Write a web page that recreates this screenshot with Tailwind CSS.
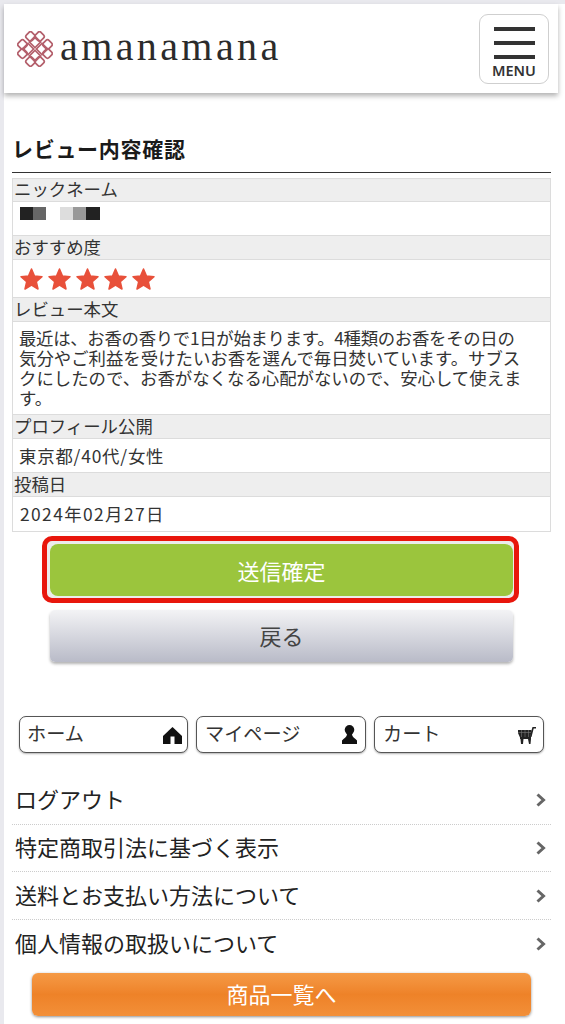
<!DOCTYPE html>
<html lang="ja">
<head>
<meta charset="utf-8">
<script src="https://cdn.jsdelivr.net/npm/@tailwindcss/browser@4"></script>
</head>
<body class="bg-[#e9e9ee] font-['Noto_Sans_CJK_JP','Noto_Sans',sans-serif] text-[#222]">
<div class="w-[565px] h-[1024px] overflow-hidden pt-[4px] pl-[4px]">
  <div class="bg-white h-[1020px]">
    <header class="h-[89px] bg-white shadow-[0_3px_5px_rgba(0,0,0,0.3)] flex items-center justify-between pl-[13px] pr-[9px] relative mr-[7px]">
      <div class="flex items-center gap-[7px]">
        <svg width="36" height="36" viewBox="0 0 36 36" fill="none" stroke="#b4606c" stroke-width="1.700">
          <rect x="9.500" y="1.500" width="8" height="8" rx="2.400" transform="rotate(45 13.500 5.500)"/>
          <rect x="18.500" y="1.500" width="8" height="8" rx="2.400" transform="rotate(45 22.500 5.500)"/>
          <rect x="9.500" y="26.500" width="8" height="8" rx="2.400" transform="rotate(45 13.500 30.500)"/>
          <rect x="18.500" y="26.500" width="8" height="8" rx="2.400" transform="rotate(45 22.500 30.500)"/>
          <rect x="1.500" y="9.500" width="8" height="8" rx="2.400" transform="rotate(45 5.500 13.500)"/>
          <rect x="1.500" y="18.500" width="8" height="8" rx="2.400" transform="rotate(45 5.500 22.500)"/>
          <rect x="26.500" y="9.500" width="8" height="8" rx="2.400" transform="rotate(45 30.500 13.500)"/>
          <rect x="26.500" y="18.500" width="8" height="8" rx="2.400" transform="rotate(45 30.500 22.500)"/>
          <rect x="14" y="7" width="8" height="8" transform="rotate(45 18 11)"/>
          <rect x="14" y="21" width="8" height="8" transform="rotate(45 18 25)"/>
          <rect x="7" y="14" width="8" height="8" transform="rotate(45 11 18)"/>
          <rect x="21" y="14" width="8" height="8" transform="rotate(45 25 18)"/>
        </svg>
        <span class="font-['Liberation_Serif',serif] text-[40px] leading-none tracking-[3.400px] text-[#2b2b2b] -mt-[4px]">amanamana</span>
      </div>
      <button class="w-[70px] h-[70px] border border-[#cfcfcf] rounded-[9px] bg-white flex flex-col items-center pt-[12px]">
        <span class="block w-[41px] h-[4px] bg-[#333]"></span>
        <span class="block w-[41px] h-[4px] bg-[#333] mt-[10px]"></span>
        <span class="block w-[41px] h-[4px] bg-[#333] mt-[10px]"></span>
        <span class="font-['Noto_Sans',sans-serif] font-semibold text-[14.500px] leading-none text-[#333] mt-[4px]">MENU</span>
      </button>
    </header>

    <main class="pl-[8px] pr-[10px]">
      <h1 class="mt-[41px] text-[21px] font-bold leading-[28px] text-[#1a1a1a] tracking-[0.700px]">レビュー内容確認</h1>
      <div class="mt-[10px] border-t border-[#333] w-[539px]"></div>

      <dl class="mt-[5px] w-[539px] border border-[#dcdcdc] text-[17.400px] leading-[20px] text-[#333]">
        <dt class="h-[23px] bg-[#eeeeee] border-b border-[#dcdcdc] pl-[1px]">ニックネーム</dt>
        <dd class="h-[34px] bg-white border-b border-[#dcdcdc] flex pt-[5px] pl-[7px]">
          <span class="block w-[13px] h-[13px] bg-[#222]"></span>
          <span class="block w-[13px] h-[13px] bg-[#666]"></span>
          <span class="block w-[14px] h-[13px]"></span>
          <span class="block w-[13px] h-[13px] bg-[#ddd]"></span>
          <span class="block w-[13px] h-[13px] bg-[#999]"></span>
          <span class="block w-[14px] h-[13px] bg-[#222]"></span>
        </dd>
        <dt class="h-[24px] bg-[#eeeeee] border-b border-[#dcdcdc] pl-[1px] pt-[1px]">おすすめ度</dt>
        <dd class="h-[38px] bg-white border-b border-[#dcdcdc] flex items-center pl-[6px] gap-[3px]">
          <svg width="25" height="24" viewBox="0 0 24 24" fill="#e8503a" stroke="#e8503a" stroke-width="1.500" stroke-linejoin="round"><path d="M12 2l3 7 7.500.7-5.700 5 1.700 7.300L12 18.200 5.500 22l1.700-7.300-5.700-5L9 9z"/></svg>
          <svg width="25" height="24" viewBox="0 0 24 24" fill="#e8503a" stroke="#e8503a" stroke-width="1.500" stroke-linejoin="round"><path d="M12 2l3 7 7.500.7-5.700 5 1.700 7.300L12 18.200 5.500 22l1.700-7.300-5.700-5L9 9z"/></svg>
          <svg width="25" height="24" viewBox="0 0 24 24" fill="#e8503a" stroke="#e8503a" stroke-width="1.500" stroke-linejoin="round"><path d="M12 2l3 7 7.500.7-5.700 5 1.700 7.300L12 18.200 5.500 22l1.700-7.300-5.700-5L9 9z"/></svg>
          <svg width="25" height="24" viewBox="0 0 24 24" fill="#e8503a" stroke="#e8503a" stroke-width="1.500" stroke-linejoin="round"><path d="M12 2l3 7 7.500.7-5.700 5 1.700 7.300L12 18.200 5.500 22l1.700-7.300-5.700-5L9 9z"/></svg>
          <svg width="25" height="24" viewBox="0 0 24 24" fill="#e8503a" stroke="#e8503a" stroke-width="1.500" stroke-linejoin="round"><path d="M12 2l3 7 7.500.7-5.700 5 1.700 7.300L12 18.200 5.500 22l1.700-7.300-5.700-5L9 9z"/></svg>
        </dd>
        <dt class="h-[24px] bg-[#eeeeee] border-b border-[#dcdcdc] pl-[1px] pt-[1px]">レビュー本文</dt>
        <dd class="h-[93px] bg-white border-b border-[#dcdcdc] pt-[6px] pl-[6px] pr-[2px] whitespace-nowrap"><span class="tracking-[-0.300px]">最近は、お香の香りで1日が始まります。4種類のお香をその日の</span><br>気分やご利益を受けたいお香を選んで毎日焚いています。サブス<br>クにしたので、お香がなくなる心配がないので、安心して使えま<br>す。</dd>
        <dt class="h-[24px] bg-[#eeeeee] border-b border-[#dcdcdc] pl-[1px] pt-[1px]">プロフィール公開</dt>
        <dd class="h-[34px] bg-white border-b border-[#dcdcdc] flex items-center pl-[6px] tracking-[0.800px]">東京都/40代/女性</dd>
        <dt class="h-[24px] bg-[#eeeeee] border-b border-[#dcdcdc] pl-[1px] pt-[1px]">投稿日</dt>
        <dd class="h-[34px] bg-white flex items-center pl-[7px] tracking-[1.400px]">2024年02月27日</dd>
      </dl>

      <div class="mt-[4px] ml-[30px] w-[477px] h-[67px] border-[5px] border-[#e8160c] rounded-[10px] bg-[#ececec] pt-[3px] pl-[3px] pr-[1px]">
        <button class="block w-[463px] h-[52px] rounded-[8px] bg-[#9bc53d] text-white text-[22px] font-normal">送信確定</button>
      </div>
      <button class="block mt-[7px] ml-[38px] w-[463px] h-[52px] rounded-[5px] bg-gradient-to-b from-[#f3f3f5] to-[#b9bbc8] shadow-[0_2px_3px_rgba(0,0,0,0.3)] text-[#444] text-[22px] pb-[2px]">戻る</button>

      <nav class="mt-[54px] ml-[7px] flex gap-[8px] w-[525px]">
        <a class="w-[169px] h-[37px] border border-[#555] rounded-[7px] bg-white shadow-[0_1px_2px_rgba(0,0,0,0.3)] flex items-center justify-between pl-[7px] pr-[5px] text-[19.200px] text-[#333]">
          <span class="-mt-[2px]">ホーム</span>
          <svg width="19" height="17" viewBox="0 0 19 17" class="mt-[2px]"><path fill="#111" d="M9.500 0 19 9v8H0V9z"/><rect x="7.500" y="9.500" width="4" height="7.500" fill="#fff"/></svg>
        </a>
        <a class="w-[170px] h-[37px] border border-[#555] rounded-[7px] bg-white shadow-[0_1px_2px_rgba(0,0,0,0.3)] flex items-center justify-between pl-[8px] pr-[8px] text-[19.200px] text-[#333]">
          <span class="-mt-[2px]">マイページ</span>
          <svg width="15" height="19" viewBox="0 0 15 19" fill="#111"><circle cx="7.500" cy="4.800" r="4.800"/><path d="M5 8.500h5c0 2.500 1 3.700 3.500 5.500l1.500 1.500V19H0v-3.500L1.500 14C4 12.200 5 11 5 8.500z"/></svg>
        </a>
        <a class="w-[170px] h-[37px] border border-[#555] rounded-[7px] bg-white shadow-[0_1px_2px_rgba(0,0,0,0.3)] flex items-center justify-between pl-[8px] pr-[7px] text-[19.200px] text-[#333]">
          <span class="-mt-[2px]">カート</span>
          <svg width="18" height="18" viewBox="0 0 18 18" fill="#222"><path d="M0 4h13.500l-1 7.500H2L0 7z"/><path d="M13 6 14.500 1H18v1.500h-2.300L13.500 11 12 11z"/><path d="M2 11h11v2H2z"/><path d="M2.500 13h3l-.5 5H3zM10 13h3l-.5 5H11z"/><path stroke="#777" stroke-width=".6" d="M0 6.500h13M3.500 4v7M7 4v7M10.500 4v7"/></svg>
        </a>
      </nav>

      <ul class="mt-[24px] w-[539px] text-[22px] text-[#222]">
        <li class="h-[47.670px] border-b border-dotted border-[#ccc] flex items-center justify-between pl-[3px] pr-[5px]">
          <span class="-mt-[3px]">ログアウト</span>
          <svg width="10" height="14" viewBox="0 0 10 14" fill="none" stroke="#666" stroke-width="3"><path d="M1.500 1.500 7.500 7l-6 5.500"/></svg>
        </li>
        <li class="h-[47.670px] border-b border-dotted border-[#ccc] flex items-center justify-between pl-[3px] pr-[5px]">
          <span class="-mt-[3px]">特定商取引法に基づく表示</span>
          <svg width="10" height="14" viewBox="0 0 10 14" fill="none" stroke="#666" stroke-width="3"><path d="M1.500 1.500 7.500 7l-6 5.500"/></svg>
        </li>
        <li class="h-[47.670px] border-b border-dotted border-[#ccc] flex items-center justify-between pl-[3px] pr-[5px]">
          <span class="-mt-[3px]">送料とお支払い方法について</span>
          <svg width="10" height="14" viewBox="0 0 10 14" fill="none" stroke="#666" stroke-width="3"><path d="M1.500 1.500 7.500 7l-6 5.500"/></svg>
        </li>
        <li class="h-[47.670px] flex items-center justify-between pl-[3px] pr-[5px]">
          <span class="-mt-[3px]">個人情報の取扱いについて</span>
          <svg width="10" height="14" viewBox="0 0 10 14" fill="none" stroke="#666" stroke-width="3"><path d="M1.500 1.500 7.500 7l-6 5.500"/></svg>
        </li>
      </ul>

      <button class="block mt-[5px] ml-[20px] w-[499px] h-[43px] rounded-[6px] bg-gradient-to-b from-[#f59a45] via-[#ee8228] to-[#f28f38] shadow-[0_1px_3px_rgba(0,0,0,0.45)] text-white text-[22px] pb-[2px]">商品一覧へ</button>
    </main>
  </div>
</div>
</body>
</html>
